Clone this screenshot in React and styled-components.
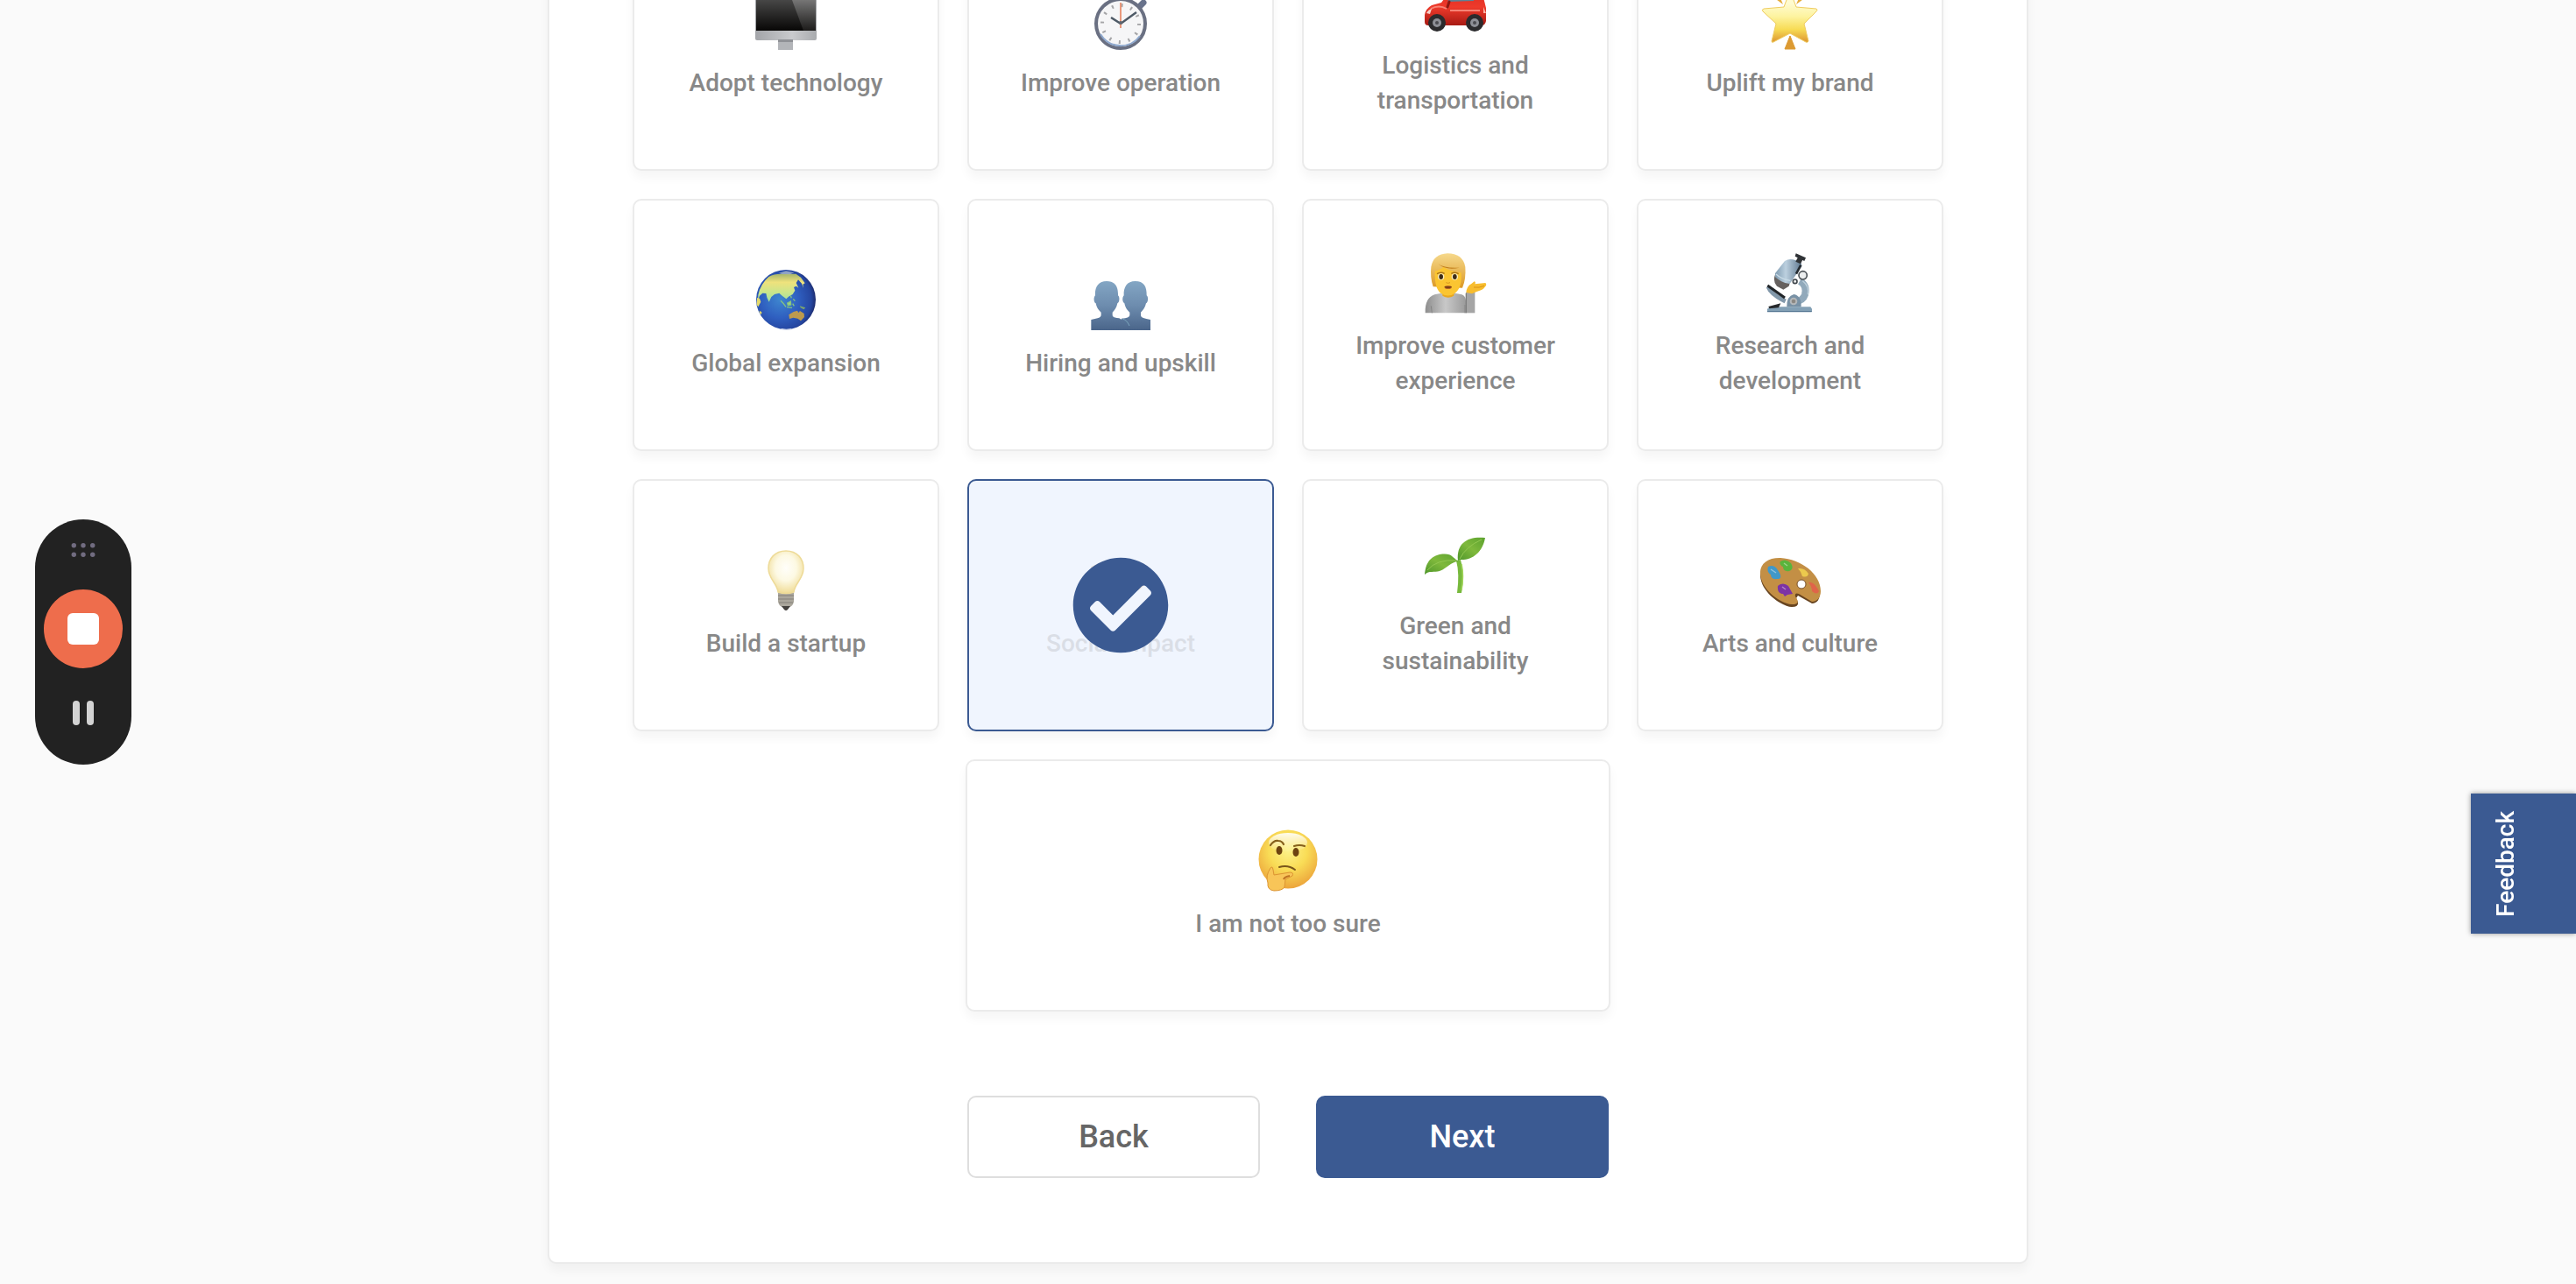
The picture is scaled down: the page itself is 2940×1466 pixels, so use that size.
import React, { useState } from "react";
import styled, { createGlobalStyle } from "styled-components";
import { FaCheckCircle } from "react-icons/fa";

const GlobalStyle = createGlobalStyle`
  * {
    box-sizing: border-box;
  }
  body {
    margin: 0;
    background: #fafafa;
    font-family: Roboto, "Liberation Sans", sans-serif;
  }
  button {
    margin: 0;
    font-family: inherit;
    cursor: pointer;
  }
`;

const Page = styled.main`
  display: flex;
  flex-direction: column;
  justify-content: flex-end;
  align-items: center;
  height: 100vh;
  padding-bottom: 23px;
  overflow: hidden;
`;

const Panel = styled.section`
  flex-shrink: 0;
  width: 100%;
  max-width: 1690px;
  padding: 96px 95px;
  background: #fff;
  border: 2px solid #ebebeb;
  border-radius: 10px;
  box-shadow: 0 8px 12px rgba(0, 0, 0, 0.04);
`;

const Grid = styled.div`
  display: grid;
  grid-template-columns: repeat(4, 1fr);
  gap: 32px;
`;

const Card = styled.button`
  position: relative;
  display: flex;
  flex-direction: column;
  align-items: center;
  justify-content: center;
  gap: 16px;
  min-height: 288px;
  padding: 0 48px;
  color: #888;
  background: ${props => (props.$selected ? "#f0f5fe" : "#fff")};
  border: 2px solid ${props => (props.$selected ? "#3b5a92" : "#ebebeb")};
  border-radius: 10px;
  box-shadow: 0 8px 12px rgba(0, 0, 0, 0.04);
  ${props => props.$wide && "grid-column: 2 / span 2; margin: 0 -2px;"}
`;

const Emoji = styled.svg`
  width: 72px;
  height: 72px;
  opacity: ${props => (props.$faded ? 0.2 : 1)};
`;

const CardLabel = styled.span`
  font-size: 28px;
  font-weight: 500;
  line-height: 40px;
  text-align: center;
  opacity: ${props => (props.$faded ? 0.2 : 1)};
`;

const CheckMark = styled(FaCheckCircle)`
  position: absolute;
  inset: 0;
  margin: auto;
  font-size: 112px;
  color: #3b5a92;
`;

const Actions = styled.div`
  grid-column: 2 / span 2;
  display: grid;
  grid-template-columns: 1fr 1fr;
  gap: 64px;
  margin-top: 64px;
`;

const ActionButton = styled.button`
  height: 94px;
  font-size: 36px;
  font-weight: 500;
  color: ${props => (props.$primary ? "#fff" : "#666")};
  background: ${props => (props.$primary ? "#3b5a92" : "#fff")};
  border: 2px solid ${props => (props.$primary ? "#3b5a92" : "#dedede")};
  border-radius: 10px;
`;

const Feedback = styled.button`
  position: fixed;
  right: 0;
  bottom: 400px;
  display: flex;
  align-items: center;
  justify-content: center;
  width: 120px;
  height: 160px;
  padding: 0 40px 0 0;
  color: #fff;
  background: #3b5a92;
  border: 0;
  box-shadow: 0 0 6px rgba(0, 0, 0, 0.4);
`;

const FeedbackText = styled.span`
  writing-mode: vertical-rl;
  transform: rotate(180deg);
  font-size: 28px;
  font-weight: 500;
  line-height: 40px;
`;

const Recorder = styled.aside`
  position: fixed;
  left: 40px;
  top: 50%;
  transform: translateY(-50%);
  display: flex;
  flex-direction: column;
  align-items: center;
  gap: 37px;
  width: 110px;
  padding: 27px 0 45px;
  background: #222;
  border-radius: 55px;
`;

const StopButton = styled.button`
  display: flex;
  align-items: center;
  justify-content: center;
  width: 90px;
  height: 90px;
  padding: 0;
  background: #ee6d4c;
  border: 0;
  border-radius: 50%;
`;

const StopSquare = styled.span`
  width: 36px;
  height: 36px;
  background: #fff;
  border-radius: 6px;
`;

const PauseButton = styled.button`
  display: flex;
  gap: 8px;
  padding: 0;
  background: none;
  border: 0;
`;

const PauseBar = styled.span`
  width: 8px;
  height: 28px;
  background: #d3d3d3;
  border-radius: 4px;
`;

const monitor = (
  <>
    <defs>
      <linearGradient id="screen" x1="0" y1="0" x2="0" y2="1">
        <stop offset="0" stopColor="#555" />
        <stop offset="1" stopColor="#080706" />
      </linearGradient>
      <linearGradient id="glare" x1="0" y1="0" x2="0" y2="1">
        <stop offset="0" stopColor="#8a8a8a" />
        <stop offset="1" stopColor="#1c1b1a" />
      </linearGradient>
      <linearGradient id="chin">
        <stop offset="0" stopColor="#a3a5a9" />
        <stop offset="0.6" stopColor="#c9cacd" />
        <stop offset="1" stopColor="#a9abae" />
      </linearGradient>
    </defs>
    <rect x="1" y="4" width="70" height="55" rx="2" fill="url(#chin)" />
    <rect x="2" y="5" width="68" height="43" fill="url(#screen)" />
    <path d="M40 5H70V48H56Z" fill="url(#glare)" />
    <rect x="27" y="58" width="17" height="12" fill="#b3b5b9" />
    <rect x="27" y="58" width="17" height="3" fill="#909297" />
  </>
);

const stopwatch = (
  <>
    <path d="M56 22L62 16" stroke="#69738c" strokeWidth="7" strokeLinecap="round" />
    <circle cx="36" cy="40" r="28" fill="#f6f6f7" stroke="#6a7082" strokeWidth="4" />
    <path d="M13 52A27 27 0 0 0 58 54" fill="none" stroke="#8fa9ce" strokeWidth="2" />
    <circle
      cx="36"
      cy="40"
      r="21"
      fill="none"
      stroke="#a5a5a7"
      strokeWidth="4"
      strokeDasharray="2 9"
    />
    <path d="M36 40L54 27M36 40L25 33" stroke="#4e5a66" strokeWidth="2.4" />
    <path d="M36 16V45" stroke="#e8906f" strokeWidth="1.8" />
    <circle cx="36" cy="39" r="2" fill="#606670" />
  </>
);

const car = (
  <>
    <defs>
      <linearGradient id="paint" x1="0" y1="0" x2="0" y2="1">
        <stop offset="0" stopColor="#d92c20" />
        <stop offset="0.5" stopColor="#ee3a2b" />
        <stop offset="1" stopColor="#a81b14" />
      </linearGradient>
    </defs>
    <path
      d="M1 58V50Q2 43 9 39L20 36L29 24Q32 20 40 20H60Q66 21 68 30L71 42V57Q70 62 66 62H5Q1 62 1 58Z"
      fill="url(#paint)"
    />
    <path d="M27 35L33 25Q35 23 39 23H55L57 34Z" fill="#5b8296" />
    <path d="M29 35L27 41" stroke="#8e1912" strokeWidth="3" strokeLinecap="round" />
    <path d="M8 43Q17 38 26 43M30 45H64" fill="none" stroke="#f78375" strokeWidth="2" />
    <path d="M3 48Q5 44 9 43L7 49Z" fill="#f6d3cb" />
    <path d="M68 41L71 48H68Z" fill="#ffb4a4" />
    <circle cx="15" cy="59" r="10" fill="#2b2b2d" />
    <circle cx="58" cy="59" r="10" fill="#2b2b2d" />
    <circle cx="15" cy="59" r="5" fill="#8d8f96" />
    <circle cx="58" cy="59" r="5" fill="#8d8f96" />
    <circle cx="15" cy="59" r="2" fill="#4a4b50" />
    <circle cx="58" cy="59" r="2" fill="#4a4b50" />
  </>
);

const star = (
  <>
    <defs>
      <linearGradient id="gold" x1="0" y1="0" x2="0" y2="1">
        <stop offset="0.25" stopColor="#fffbd0" />
        <stop offset="0.5" stopColor="#fdf3a0" />
        <stop offset="0.75" stopColor="#f7dc55" />
        <stop offset="1" stopColor="#dd9430" />
      </linearGradient>
    </defs>
    <path d="M13 7L28 18L22 4ZM58 7L43 18L49 4Z" fill="#e5ac3b" />
    <path
      d="M36 2L43 21L66 23Q68 24 66 26L52 40L57 60Q56 62 54 61L36 51L17 61Q15 62 15 60L20 40L5 26Q3 24 6 23L29 21Z"
      fill="url(#gold)"
      stroke="#efcc60"
      strokeWidth="1"
    />
    <path d="M36 54L42 69H30Z" fill="#dc9a32" stroke="#dc9a32" />
  </>
);

const globe = (
  <>
    <defs>
      <radialGradient id="sea" cx="0.4" cy="0.5" r="0.62">
        <stop offset="0" stopColor="#3e86cf" />
        <stop offset="0.5" stopColor="#2f5fc0" />
        <stop offset="0.85" stopColor="#2546a0" />
        <stop offset="1" stopColor="#1c2560" />
      </radialGradient>
      <linearGradient id="land" x1="0" y1="0" x2="0" y2="1">
        <stop offset="0" stopColor="#a5b56c" />
        <stop offset="0.3" stopColor="#efe27c" />
        <stop offset="0.65" stopColor="#cbe58b" />
        <stop offset="1" stopColor="#9fdf9f" />
      </linearGradient>
    </defs>
    <circle cx="171" cy="156" r="102" fill="url(#sea)" />
    <path
      d="M76 140Q84 103 112 78Q135 66 165 69L205 68L222 80L236 100L229 104L231 117L225 101L213 88L206 99L214 116L206 110L198 114L202 125L194 138L180 146L172 154L158 143L148 134L132 138L121 147L113 164L106 149L103 135L91 134L81 143L75 159Z"
      fill="url(#land)"
    />
    <path d="M72 150L81 152L85 164L76 181L71 174ZM80 194L88 199L87 207L82 204Z" fill="#e5da6b" />
    <path
      d="M153 160L162 169L171 181M174 182L192 184M176 168L187 162L188 174L178 176ZM194 170L199 178M187 143L190 151M196 154L202 161"
      fill="#9fd67e"
      stroke="#86c37f"
      strokeWidth="4"
    />
    <path d="M218 178L238 184L232 190L221 184Z" fill="#7ca56d" />
    <path d="M181 208L197 198L210 194L214 201L219 195L233 204L234 216L222 229L211 221L196 218L183 222Z" fill="#bd9a4d" />
    <path d="M147 65L171 58L199 64L185 70L158 69Z" fill="#d3dad5" opacity="0.6" />
    <path d="M155 257Q174 261 190 257" stroke="#cfd7ea" strokeWidth="4" fill="none" />
  </>
);

const people = (
  <>
    <defs>
      <linearGradient id="figure" x1="0" y1="0" x2="0" y2="1">
        <stop offset="0" stopColor="#83a6c4" />
        <stop offset="0.5" stopColor="#6d8cae" />
        <stop offset="1" stopColor="#4a658a" />
      </linearGradient>
    </defs>
    <path
      d="M129 93C158 93 169 111 168 142C175 147 173 166 166 169C163 184 157 192 149 200V211Q151 219 172 220L206 240V261H76V225L98 220Q109 217 110 210V200Q95 188 92 169C84 165 84 148 90 142C88 113 101 93 129 93Z"
      fill="url(#figure)"
    />
    <path
      d="M227 93C256 93 267 111 266 142C273 147 271 166 264 169C261 184 254 192 246 200V211Q247 219 265 222L279 225V261H180V221Q208 219 208 210V200Q193 188 190 169C182 165 182 148 188 142C186 113 199 93 227 93Z"
      fill="url(#figure)"
    />
    <path d="M183 222Q199 226 207 246" fill="none" stroke="#7ba6bd" strokeWidth="3" />
  </>
);

const attendant = (
  <>
    <defs>
      <linearGradient id="shirt">
        <stop offset="0" stopColor="#8e8e8e" />
        <stop offset="0.5" stopColor="#c8c8c8" />
        <stop offset="1" stopColor="#9b9b9b" />
      </linearGradient>
      <linearGradient id="hair" x1="0" y1="0" x2="0" y2="1">
        <stop offset="0" stopColor="#f6d98c" />
        <stop offset="1" stopColor="#dc9925" />
      </linearGradient>
    </defs>
    <path d="M80 262Q78 210 112 199L158 190L205 199Q218 204 219 220V262Z" fill="url(#shirt)" />
    <path d="M219 262V192H250V262Z" fill="#a5a5a5" />
    <path d="M220 194V262" stroke="#7e7e7e" strokeWidth="4" />
    <path d="M103 262L100 238M216 262V234" stroke="#858585" strokeWidth="3" />
    <path d="M139 180H178V203Q158 215 139 203Z" fill="#e9a81f" />
    <path d="M107 172Q96 138 100 104Q108 60 156 58Q208 58 217 104Q220 145 207 176Z" fill="url(#hair)" />
    <path d="M113 118Q111 180 134 195Q158 210 181 195Q207 176 203 124Q166 122 143 104Q127 117 113 118Z" fill="#fbc531" />
    <path d="M124 94Q145 110 197 107Q150 117 124 94Z" fill="#c17c19" />
    <path d="M120 128Q133 120 146 127M169 127Q182 120 194 128" stroke="#a87218" strokeWidth="4" fill="none" />
    <circle cx="134" cy="138" r="11" fill="#fff1c2" />
    <circle cx="181" cy="138" r="11" fill="#fff1c2" />
    <ellipse cx="134" cy="138" rx="7" ry="9" fill="#3e2c17" />
    <ellipse cx="181" cy="138" rx="7" ry="9" fill="#3e2c17" />
    <path d="M151 158Q158 162 165 158" stroke="#d9961c" strokeWidth="3" fill="none" />
    <ellipse cx="158" cy="174" rx="12" ry="6" fill="#bd6422" />
    <path d="M146 173Q158 176 170 173" stroke="#6e3a17" strokeWidth="3" />
    <path d="M220 192Q222 170 238 162L248 154Q254 156 250 163L286 159Q292 166 285 172Q277 185 258 188L240 196Z" fill="#f8bd2e" />
    <path d="M246 174Q264 177 282 169" stroke="#d99316" strokeWidth="3" fill="none" />
  </>
);

const microscope = (
  <>
    <defs>
      <linearGradient id="tube">
        <stop offset="0" stopColor="#7f9bb1" />
        <stop offset="0.4" stopColor="#bcd0df" />
        <stop offset="1" stopColor="#5f7890" />
      </linearGradient>
    </defs>
    <path d="M1362 153Q1388 167 1380 199Q1373 222 1343 224" stroke="#91a9bb" strokeWidth="24" fill="none" />
    <path d="M1372 152Q1396 170 1390 199" stroke="#bed0dc" strokeWidth="4" fill="none" />
    <path d="M1251 258V248L1262 241H1399L1404 248V258Z" fill="#83a0b5" />
    <path d="M1251 257H1403" stroke="#557792" strokeWidth="4" />
    <path d="M1318 241Q1317 204 1342 198Q1368 202 1367 241Z" fill="#7891a5" />
    <circle cx="1341" cy="222" r="13" fill="#b3b7b9" />
    <circle cx="1341" cy="222" r="7" fill="#8b8883" />
    <path d="M1254 172Q1264 198 1313 222" stroke="#8298aa" strokeWidth="15" fill="none" />
    <path d="M1252 168L1311 210" stroke="#202428" strokeWidth="9" />
    <path d="M1255 240L1297 229L1290 244L1258 247Z" fill="#26292c" />
    <path d="M1277 133Q1270 155 1284 170L1306 182L1325 170L1332 148Z" fill="#66615f" />
    <path d="M1311 84Q1331 70 1366 89L1369 102L1328 162Q1301 160 1278 139L1278 126Z" fill="url(#tube)" />
    <path d="M1281 129Q1301 148 1330 151" stroke="#c9dbe6" strokeWidth="4" fill="none" />
    <path d="M1357 69L1374 76L1365 94L1348 86Z" fill="#313437" />
    <path d="M1349 58L1383 73L1378 84L1346 68Z" fill="#303337" />
    <path d="M1366 98L1350 128" stroke="#252b31" strokeWidth="8" />
    <circle cx="1373" cy="133" r="14" fill="#eceeef" stroke="#4d5358" strokeWidth="5" />
    <circle cx="1346" cy="154" r="7" fill="#f4f4f4" stroke="#40474d" strokeWidth="5" />
  </>
);

const bulb = (
  <>
    <defs>
      <radialGradient id="glow" cx="0.5" cy="0.4" r="0.6">
        <stop offset="0" stopColor="#fffefa" />
        <stop offset="0.5" stopColor="#fdf9e3" />
        <stop offset="1" stopColor="#f0dc96" />
      </radialGradient>
    </defs>
    <path d="M27 48H45V60Q44 65 40 66L36 70L32 66Q28 65 27 60Z" fill="#aaa69c" />
    <path d="M27 53H45M27 57H45M28 61H44" stroke="#85817a" strokeWidth="1" />
    <path d="M31 65H41L38 69Q36 71 34 69Z" fill="#45423f" />
    <path
      d="M36 2C49 2 56 11 56 22C56 34 46 39 45 49Q36 52 27 49C26 39 16 34 16 22C16 11 23 2 36 2Z"
      fill="url(#glow)"
      stroke="#eedb98"
      strokeWidth="1.5"
    />
  </>
);

const handshake = (
  <>
    <path d="M2 20L16 14L30 20L42 13L58 17L70 34L58 46L46 52L30 50L12 40Z" fill="#e0a24a" />
    <path d="M30 20L26 31L38 28L54 42" fill="none" stroke="#b87a2c" strokeWidth="2" />
  </>
);

const seedling = (
  <>
    <defs>
      <linearGradient id="leaf" x1="0" y1="1" x2="1" y2="0">
        <stop offset="0" stopColor="#4e962b" />
        <stop offset="0.5" stopColor="#7fb93c" />
        <stop offset="1" stopColor="#5ca22f" />
      </linearGradient>
    </defs>
    <path d="M37 33Q41 48 38 70H43Q47 50 42 32Z" fill="#77b93c" />
    <path d="M43 37Q46 50 43 67" stroke="#a2d55c" strokeWidth="1.5" fill="none" />
    <path d="M39 33C37 12 51 5 70 7C67 24 55 33 41 32Z" fill="url(#leaf)" />
    <path d="M40 34C31 29 33 24 18 26C5 29 2 39 1 49C6 44 12 47 18 45C28 41 31 34 40 34Z" fill="url(#leaf)" />
    <path d="M41 31Q48 17 66 9M4 44Q15 31 37 33" stroke="#93c851" strokeWidth="1" fill="none" />
  </>
);

const palette = (
  <>
    <path
      d="M2 29C3 16 13 10 24 11C48 12 70 30 70 50C70 57 67 62 61 62L45 53L43 56Q49 66 38 66C26 65 2 49 2 29Z"
      fill="#684521"
    />
    <path
      d="M2 27C2 16 11 10 24 10C48 11 71 28 71 48C71 55 67 60 61 60L46 51Q41 49 42 54Q49 63 38 63C25 62 2 46 2 27Z"
      fill="#c38f45"
    />
    <circle cx="49" cy="40" r="5" fill="#fff" stroke="#76502a" strokeWidth="1" />
    <path d="M11 20Q18 17 22 24Q29 34 21 34Q14 35 14 29Q9 26 11 20Z" fill="#4198c8" />
    <path d="M25 14Q31 10 37 16Q41 23 35 25Q28 26 28 20Q23 18 25 14Z" fill="#5ab43c" />
    <path d="M45 22Q53 21 57 28Q56 33 50 31Q49 26 45 22Z" fill="#ecc94d" />
    <path d="M57 38Q63 36 69 48Q67 53 61 48Q61 43 57 38Z" fill="#df6549" />
    <path d="M22 42Q28 37 34 42L39 51L33 52L30 54L28 51Q21 51 22 42Z" fill="#7d33a5" />
    <path d="M14 23L20 27M29 16L33 19M27 43L31 46" stroke="#fff" strokeWidth="1.5" opacity="0.4" />
  </>
);

const thinking = (
  <>
    <defs>
      <radialGradient id="face" cx="0.5" cy="0.35" r="0.65">
        <stop offset="0" stopColor="#fdf28a" />
        <stop offset="0.5" stopColor="#f9dc56" />
        <stop offset="1" stopColor="#eca43b" />
      </radialGradient>
      <linearGradient id="shine" x1="0" y1="0" x2="0" y2="1">
        <stop offset="0" stopColor="#fff" stopOpacity="0.9" />
        <stop offset="1" stopColor="#fff" stopOpacity="0" />
      </linearGradient>
    </defs>
    <circle cx="36" cy="34" r="33.5" fill="url(#face)" />
    <ellipse cx="36" cy="15" rx="22" ry="11" fill="url(#shine)" />
    <path
      d="M16 18Q20 12 25 13Q29 13 31 17M43 19Q49 17 55 19"
      stroke="#86601b"
      strokeWidth="2.2"
      fill="none"
      strokeLinecap="round"
    />
    <ellipse cx="26" cy="24" rx="3.5" ry="5" fill="#6d4310" />
    <ellipse cx="45" cy="26" rx="3.5" ry="5" fill="#6d4310" />
    <path d="M26 43Q36 40 44 46" stroke="#79561a" strokeWidth="2" fill="none" strokeLinecap="round" />
    <path
      d="M16 44Q18 41 19 46L20 52L38 49Q43 49 41 53L33 57L32 66Q29 70 20 70Q12 69 13 61Q10 53 16 44Z"
      fill="#f8c558"
      stroke="#dc9432"
      strokeWidth="1"
    />
    <path d="M31 57Q32 54 38 53" stroke="#bd7122" strokeWidth="2" fill="none" />
  </>
);

const goals = [
  { label: "Adopt technology", art: monitor },
  { label: "Improve operation", art: stopwatch },
  { label: "Logistics and transportation", art: car },
  { label: "Uplift my brand", art: star },
  { label: "Global expansion", art: globe, viewBox: "63 51 216 216" },
  { label: "Hiring and upskill", art: people, viewBox: "69 51 216 216" },
  { label: "Improve customer experience", art: attendant, viewBox: "75 51 216 216" },
  { label: "Research and development", art: microscope, viewBox: "1221 51 216 216" },
  { label: "Build a startup", art: bulb },
  { label: "Social impact", art: handshake },
  { label: "Green and sustainability", art: seedling },
  { label: "Arts and culture", art: palette },
  { label: "I am not too sure", art: thinking, wide: true }
];

const GoalCard = ({ goal, selected, onToggle }) => {
  return (
    <Card type="button" aria-pressed={selected} $selected={selected} $wide={goal.wide} onClick={onToggle}>
      <Emoji viewBox={goal.viewBox || "0 0 72 72"} $faded={selected} aria-hidden="true">
        {goal.art}
      </Emoji>
      <CardLabel $faded={selected}>{goal.label}</CardLabel>
      {selected && <CheckMark aria-hidden="true" />}
    </Card>
  );
};

const RecorderControls = () => {
  return (
    <Recorder>
      <svg width="28" height="16" viewBox="0 0 28 16" fill="#716c80" aria-hidden="true">
        {[3.3, 14, 24.7].map(x => (
          <React.Fragment key={x}>
            <circle cx={x} cy="2.7" r="2.7" />
            <circle cx={x} cy="13.3" r="2.7" />
          </React.Fragment>
        ))}
      </svg>
      <StopButton type="button" aria-label="Stop recording">
        <StopSquare />
      </StopButton>
      <PauseButton type="button" aria-label="Pause recording">
        <PauseBar />
        <PauseBar />
      </PauseButton>
    </Recorder>
  );
};

const App = () => {
  const [selected, setSelected] = useState(["Social impact"]);

  const toggle = label =>
    setSelected(
      selected.includes(label)
        ? selected.filter(item => item !== label)
        : [...selected, label]
    );

  return (
    <>
      <GlobalStyle />
      <Page>
        <Panel>
          <Grid>
            {goals.map(goal => (
              <GoalCard
                key={goal.label}
                goal={goal}
                selected={selected.includes(goal.label)}
                onToggle={() => toggle(goal.label)}
              />
            ))}
            <Actions>
              <ActionButton type="button">Back</ActionButton>
              <ActionButton type="button" $primary>
                Next
              </ActionButton>
            </Actions>
          </Grid>
        </Panel>
      </Page>
      <RecorderControls />
      <Feedback type="button">
        <FeedbackText>Feedback</FeedbackText>
      </Feedback>
    </>
  );
};

export default App;
